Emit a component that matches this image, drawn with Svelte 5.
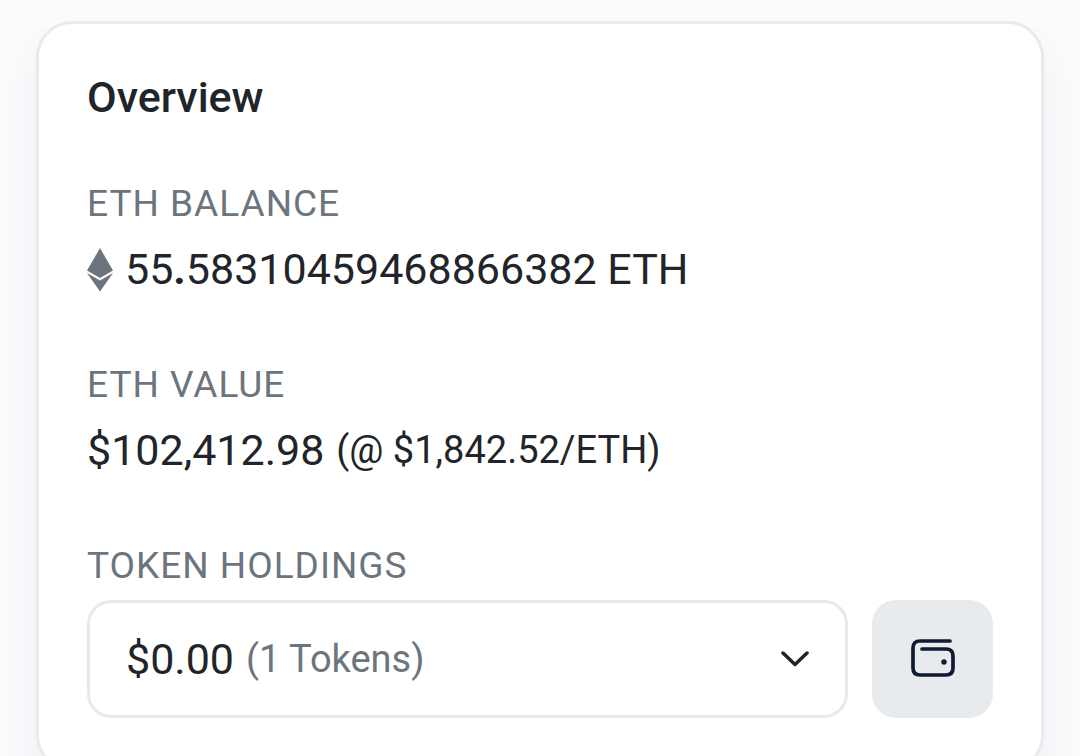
<script lang="ts">
    let balance = "55.58310459468866382";
    let ethPrice = "1,842.52";
    let ethValue = "102,412.98";
    let tokenValue = "0.00";
    let tokenCount = 1;

    const [whole, decimals] = balance.split(".");
</script>

<main>
    <section class="card">
        <h1>Overview</h1>

        <div class="item">
            <h2>ETH Balance</h2>
            <p class="value">
                <svg class="eth" viewBox="0 0 26 44" aria-hidden="true">
                    <path d="M13 0L26 22.5L13 30L0 22.5Z" />
                    <path d="M0 25L13 32.5L26 25L13 43.5Z" />
                </svg>
                <span>{whole}<b>.</b>{decimals} ETH</span>
            </p>
        </div>

        <div class="item">
            <h2>ETH Value</h2>
            <p class="value">
                <span>${ethValue}</span>
                <small>(@ ${ethPrice}/ETH)</small>
            </p>
        </div>

        <div class="item">
            <h2 id="holdings-label">Token Holdings</h2>
            <div class="holdings">
                <button class="dropdown" aria-haspopup="listbox" aria-describedby="holdings-label">
                    <span>${tokenValue}</span>
                    <small>({tokenCount} Tokens)</small>
                    <svg class="chevron" viewBox="0 0 28 16" aria-hidden="true">
                        <path d="M2 2L14 13.5L26 2" />
                    </svg>
                </button>
                <button class="wallet" aria-label="View token holdings">
                    <svg viewBox="0 0 44 40" aria-hidden="true">
                        <path d="M39 2H9Q2 2 2 9V29Q2 36 9 36H35Q42 36 42 29V17Q42 10 35 10H11" />
                        <circle cx="33" cy="23" r="2.7" />
                    </svg>
                </button>
            </div>
        </div>
    </section>
</main>

<style>
    :global(body) {
        margin: 0;
        background: #fafbfd;
    }
    main {
        padding: 21px 36px;
        font-family: Roboto, "Liberation Sans", sans-serif;
        color: #212529;
    }
    .card {
        display: flex;
        flex-direction: column;
        gap: 56px;
        padding: 50px 48px;
        background: #fff;
        border: 3px solid #e9eaec;
        border-radius: 36px;
        box-shadow: 0 24px 36px rgba(160, 168, 178, 0.14);
    }
    h1, h2, p {
        margin: 0;
    }
    h1 {
        font-size: 43px;
        line-height: 46px;
        font-weight: 500;
    }
    h2 {
        margin-bottom: 6px;
        font-size: 37px;
        line-height: 56px;
        font-weight: 400;
        letter-spacing: 1px;
        text-transform: uppercase;
        color: #6c757d;
    }
    .value {
        display: flex;
        align-items: center;
        gap: 12px;
        font-size: 43px;
        line-height: 63px;
    }
    small {
        font-size: 38px;
    }
    .eth {
        width: 26px;
        height: 44px;
        fill: #6c757d;
    }
    .holdings {
        display: flex;
        gap: 24px;
    }
    button {
        box-sizing: border-box;
        height: 118px;
        border-radius: 24px;
        font-family: inherit;
        color: inherit;
        cursor: pointer;
    }
    .dropdown {
        flex: 1;
        display: flex;
        align-items: center;
        gap: 12px;
        padding: 0 36px;
        background: #fff;
        border: 3px solid #e7eaec;
        font-size: 43px;
        text-align: left;
    }
    .dropdown small {
        color: #6c757d;
    }
    .chevron {
        width: 28px;
        height: 16px;
        margin-left: auto;
        fill: none;
        stroke: #212529;
        stroke-width: 3.5;
        stroke-linecap: round;
        stroke-linejoin: round;
    }
    .wallet {
        display: flex;
        align-items: center;
        justify-content: center;
        width: 121px;
        padding: 0;
        background: #e8ebee;
        border: none;
    }
    .wallet svg {
        width: 44px;
        height: 40px;
        fill: none;
        stroke: #111a35;
        stroke-width: 3.7;
        stroke-linecap: round;
    }
    .wallet circle {
        fill: #111a35;
        stroke: none;
    }
</style>
